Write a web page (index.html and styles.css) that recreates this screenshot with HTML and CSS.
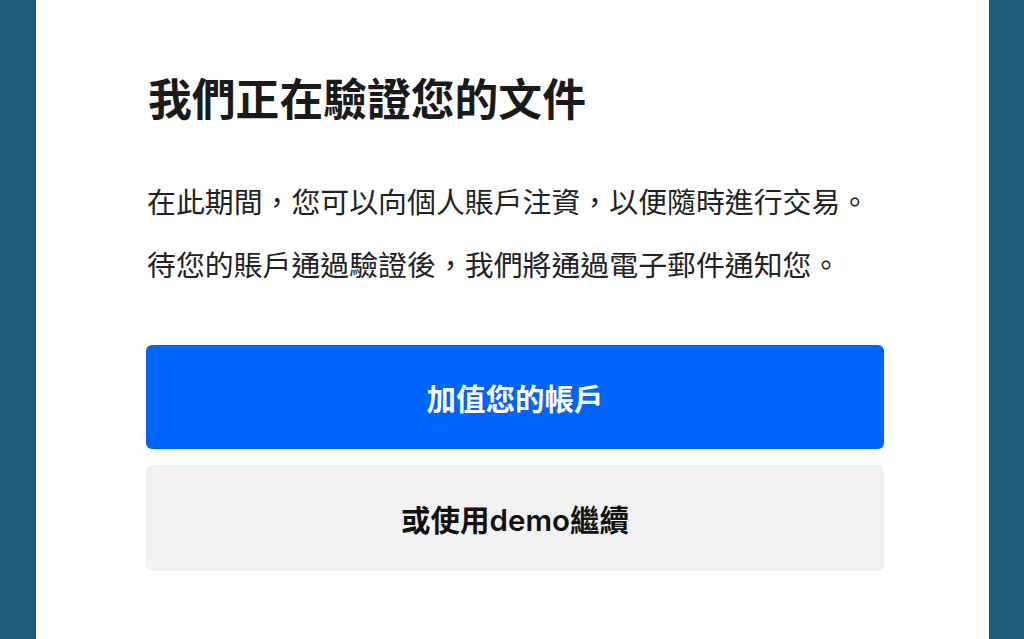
FILE: index.html
```html
<!DOCTYPE html>
<html lang="zh-Hant">
<head>
<meta charset="utf-8">
<link rel="stylesheet" href="styles.css">
</head>
<body>
<div class="page">
  <main class="panel">
    <div class="content">
      <h1 class="title">我們正在驗證您的文件</h1>
      <p class="text">在此期間，您可以向個人賬戶注資，以便隨時進行交易。</p>
      <p class="text">待您的賬戶通過驗證後，我們將通過電子郵件通知您。</p>
      <div class="actions">
        <button class="btn btn-primary">加值您的帳戶</button>
        <button class="btn btn-secondary">或使用<span class="latin">demo</span>繼續</button>
      </div>
    </div>
  </main>
</div>
</body>
</html>
```

FILE: styles.css
```css
* { box-sizing: border-box; }
html, body { margin: 0; padding: 0; height: 100%; }
body {
  background: #1b5b7b;
  font-family: "Noto Sans CJK TC", "Noto Sans", sans-serif;
  overflow: hidden;
}
.page {
  height: 639px;
  padding: 0 35px 0 36px;
  display: flex;
}
.panel {
  flex: 1;
  background: #ffffff;
  padding: 0 105px 0 111px;
}
.content {
  display: flex;
  flex-direction: column;
}
.title {
  margin: 69px 0 0 1px;
  font-size: 43.8px;
  line-height: 56px;
  font-weight: 700;
  color: #1a1a1a;
}
.text {
  margin: 0;
  font-size: 28.9px;
  line-height: 63px;
  color: #222222;
}
.title + .text { margin-top: 44px; }
.actions {
  margin-top: 50px;
  display: flex;
  flex-direction: column;
  gap: 16px;
  margin-left: -1px;
}
.btn {
  border: none;
  border-radius: 6px;
  height: 104px;
  width: 100%;
  font-family: "Noto Sans CJK TC", sans-serif;
  font-size: 29.5px;
  font-weight: 700;
  cursor: pointer;
}
.btn-primary {
  background: #0064fa;
  color: #ffffff;
}
.btn-secondary {
  background: #f2f2f2;
  color: #111111;
  height: 106px;
}
.latin {
  font-family: "Inter", "Noto Sans", sans-serif;
  font-weight: 600;
}
```
